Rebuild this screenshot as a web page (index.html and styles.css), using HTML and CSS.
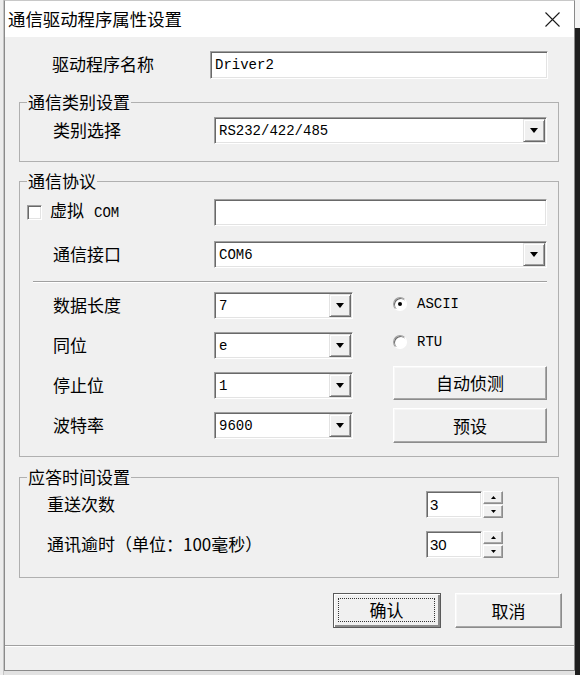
FILE: index.html
```html
<!DOCTYPE html>
<html lang="zh-CN">
<head>
<meta charset="utf-8">
<title>通信驱动程序属性设置</title>
<link rel="stylesheet" href="styles.css">
</head>
<body>
<div class="screen">
  <div class="desk-left"></div>
  <div class="middle">
    <div class="window">
      <div class="titlebar">
        <span class="title">通信驱动程序属性设置</span>
        <svg class="close" width="15" height="15" viewBox="0 0 15 15"><path d="M0.5 0.5L14.5 14.5M14.5 0.5L0.5 14.5" stroke="#1a1a1a" stroke-width="1.1" fill="none"/></svg>
      </div>
      <div class="client">
        <div class="name-row">
          <span class="label name-label">驱动程序名称</span>
          <div class="edit name-edit"><span class="mono">Driver2</span></div>
        </div>

        <fieldset class="group g1">
          <legend>通信类别设置</legend>
          <div class="row">
            <span class="label">类别选择</span>
            <div class="combo wide"><span class="value mono">RS232/422/485</span><span class="drop"><svg width="8" height="5" viewBox="0 0 8 5"><path d="M0 0H8L4 5Z" fill="#000"/></svg></span></div>
          </div>
        </fieldset>

        <fieldset class="group g2">
          <legend>通信协议</legend>
          <div class="row check-row">
            <span class="checkbox"></span>
            <span class="label">虚拟<span class="mono com">COM</span></span>
            <div class="edit wide"></div>
          </div>
          <div class="row port-row">
            <span class="label">通信接口</span>
            <div class="combo wide"><span class="value mono">COM6</span><span class="drop"><svg width="8" height="5" viewBox="0 0 8 5"><path d="M0 0H8L4 5Z" fill="#000"/></svg></span></div>
          </div>
          <div class="separator"></div>
          <div class="lower">
            <div class="lower-left">
              <div class="row-s"><span class="label">数据长度</span><div class="combo narrow"><span class="value mono">7</span><span class="drop"><svg width="8" height="5" viewBox="0 0 8 5"><path d="M0 0H8L4 5Z" fill="#000"/></svg></span></div></div>
              <div class="row-s"><span class="label">同位</span><div class="combo narrow"><span class="value mono">e</span><span class="drop"><svg width="8" height="5" viewBox="0 0 8 5"><path d="M0 0H8L4 5Z" fill="#000"/></svg></span></div></div>
              <div class="row-s"><span class="label">停止位</span><div class="combo narrow"><span class="value mono">1</span><span class="drop"><svg width="8" height="5" viewBox="0 0 8 5"><path d="M0 0H8L4 5Z" fill="#000"/></svg></span></div></div>
              <div class="row-s"><span class="label">波特率</span><div class="combo narrow"><span class="value mono">9600</span><span class="drop"><svg width="8" height="5" viewBox="0 0 8 5"><path d="M0 0H8L4 5Z" fill="#000"/></svg></span></div></div>
            </div>
            <div class="lower-right">
              <div class="radio-row"><span class="radio checked"></span><span class="mono">ASCII</span></div>
              <div class="radio-row second"><span class="radio"></span><span class="mono">RTU</span></div>
              <div class="btn detect">自动侦测</div>
              <div class="btn preset">预设</div>
            </div>
          </div>
        </fieldset>

        <fieldset class="group g3">
          <legend>应答时间设置</legend>
          <div class="spin-row">
            <span class="label">重送次数</span>
            <div class="spin">
              <div class="edit spin-edit"><span class="num">3</span></div>
              <div class="spin-btns">
                <span class="sbtn"><svg width="5" height="3" viewBox="0 0 5 3"><path d="M2.5 0L5 3H0Z" fill="#000"/></svg></span>
                <span class="sbtn"><svg width="5" height="3" viewBox="0 0 5 3"><path d="M0 0H5L2.5 3Z" fill="#000"/></svg></span>
              </div>
            </div>
          </div>
          <div class="spin-row second">
            <span class="label">通讯逾时（单位：100毫秒）</span>
            <div class="spin">
              <div class="edit spin-edit"><span class="num">30</span></div>
              <div class="spin-btns">
                <span class="sbtn"><svg width="5" height="3" viewBox="0 0 5 3"><path d="M2.5 0L5 3H0Z" fill="#000"/></svg></span>
                <span class="sbtn"><svg width="5" height="3" viewBox="0 0 5 3"><path d="M0 0H5L2.5 3Z" fill="#000"/></svg></span>
              </div>
            </div>
          </div>
        </fieldset>

        <div class="actions">
          <div class="btn default ok"><span class="focus">确认</span></div>
          <div class="btn cancel">取消</div>
        </div>
      </div>
      <div class="statusbar"></div>
    </div>
    <div class="desk-bottom"></div>
  </div>
  <div class="desk-right">
    <div class="dr-top"></div>
    <div class="dr-bottom"></div>
  </div>
</div>
</body>
</html>
```

FILE: styles.css
```css
* { box-sizing: border-box; margin: 0; padding: 0; }
html, body { width: 580px; height: 675px; overflow: hidden; }
body {
  background: #e6e6e6;
  font-family: "Noto Sans CJK SC", "Noto Sans", sans-serif;
  font-size: 17px;
  line-height: 20px;
  color: #000;
}
.screen { display: flex; height: 675px; }
.desk-left { width: 4px; background: #ececec; border-right: 1px solid #c4c4c4; }
.middle { width: 571px; display: flex; flex-direction: column; }
.desk-bottom { flex: 1; background: #e2e2e2; }
.desk-right { width: 5px; display: flex; flex-direction: column; }
.dr-top { height: 28px; background: #f4f4f4; }
.dr-bottom { flex: 1; background: #1f1f1f; }

.window {
  height: 671px;
  display: flex;
  flex-direction: column;
  background: #f0f0f0;
  border: 1px solid #8a8a8a;
  border-top-color: #c8c8c8;
}
.titlebar {
  height: 36px;
  flex: none;
  background: #fff;
  display: flex;
  align-items: center;
  justify-content: space-between;
  padding: 0 14px 0 3px;
}
.title { font-size: 17.4px; line-height: 20px; }
.close { display: block; }

.client { flex: 1; display: flex; flex-direction: column; padding-top: 14px; }
.statusbar {
  height: 25px;
  flex: none;
  border-top: 1px solid #a0a0a0;
  box-shadow: inset 0 1px #fff;
}

.label { padding-bottom: 2px; }
.mono { font-family: "Liberation Mono", "DejaVu Sans Mono", monospace; font-size: 14px; }
.com { margin-left: 10px; }
.num { font-family: "Liberation Sans", Arial, sans-serif; font-size: 15px; }

/* sunken field */
.edit, .combo, .checkbox {
  background: #fff;
  border: 1px solid;
  border-color: #a0a0a0 #fff #fff #a0a0a0;
  box-shadow: inset 1px 1px #696969, inset -1px -1px #e3e3e3;
}
.edit { height: 27px; display: flex; align-items: center; padding-left: 4px; }

.name-row { display: flex; align-items: center; padding-left: 47px; }
.name-label { width: 158px; }
.name-edit { width: 338px; height: 28px; }

.group {
  border: 1px solid #b0b0b0;
  margin: 0 15px 0 14px;
  min-width: 0;
  padding: 0;
}
.group legend {
  margin-left: 7px;
  padding: 0 1px;
  font-size: 17px;
  line-height: 20px;
}
.g1 { margin-top: 13px; padding-top: 5px; padding-bottom: 17px; }
.g2 { margin-top: 9px; padding-top: 8px; padding-bottom: 13px; }
.g3 { margin-top: 10px; padding-top: 4px; padding-bottom: 19px; }

.row { display: flex; align-items: center; padding: 0 11px 0 33px; }
.row .label { flex: 1; }
.wide { width: 333px; }
.check-row { padding-left: 7px; }
.checkbox { width: 15px; height: 15px; flex: none; margin-right: 8px; }
.port-row { margin-top: 15px; }

.combo { height: 27px; display: flex; padding: 1px; }
.combo .value { flex: 1; display: flex; align-items: center; padding-left: 3px; }
.drop {
  width: 22px;
  display: flex;
  align-items: center;
  justify-content: center;
  background: #f0f0f0;
  border: 1px solid;
  border-color: #e3e3e3 #696969 #696969 #e3e3e3;
  box-shadow: inset 1px 1px #fff, inset -1px -1px #a0a0a0;
}
.drop svg { display: block; }
.narrow { width: 139px; }

.separator {
  margin: 13px 11px 0 13px;
  height: 2px;
  border-top: 1px solid #a0a0a0;
  border-bottom: 1px solid #fff;
}

.lower { display: flex; margin-top: 9px; padding: 0 11px 0 33px; }
.lower-left { display: flex; flex-direction: column; gap: 13px; }
.row-s { display: flex; align-items: center; }
.row-s .label { width: 161px; }
.lower-right { margin-left: 40px; width: 154px; display: flex; flex-direction: column; }
.radio-row { height: 24px; display: flex; align-items: center; }
.radio-row.second { margin-top: 14px; }
.radio {
  width: 14px;
  height: 14px;
  border-radius: 50%;
  background: #fff;
  border: 1px solid;
  border-color: #a0a0a0 #fff #fff #a0a0a0;
  box-shadow: inset 1px 1px #696969;
  margin-right: 10px;
  display: flex;
  align-items: center;
  justify-content: center;
}
.radio.checked::after {
  content: "";
  width: 4px;
  height: 4px;
  border-radius: 50%;
  background: #000;
}

.btn {
  display: flex;
  align-items: center;
  justify-content: center;
  background: #f0f0f0;
  border: 1px solid;
  border-color: #fff #8c8c8c #8c8c8c #fff;
  box-shadow: inset -1px -1px #a8a8a8, inset 1px 1px #f7f7f7;
}
.detect { height: 34px; margin-top: 12px; }
.preset { height: 35px; margin-top: 8px; }

.spin-row { display: flex; align-items: center; padding: 0 55px 0 27px; }
.spin-row .label { flex: 1; }
.spin-row.second { margin-top: 13px; }
.spin { display: flex; gap: 1px; }
.spin-edit { width: 56px; padding-left: 3px; }
.spin-btns { width: 20px; height: 27px; display: flex; flex-direction: column; gap: 1px; }
.sbtn {
  flex: 1;
  display: flex;
  align-items: center;
  justify-content: center;
  background: #f0f0f0;
  border: 1px solid;
  border-color: #fff #8c8c8c #8c8c8c #fff;
  box-shadow: inset -1px -1px #a8a8a8;
}
.sbtn svg { display: block; }

.actions { display: flex; justify-content: flex-end; gap: 14px; margin-top: 15px; padding-right: 12px; }
.actions .btn { height: 35px; }
.ok { width: 108px; }
.cancel { width: 107px; }
.btn.default {
  border: 1px solid #5a5a5a;
  box-shadow: inset 1px 1px #fff, inset -2px -2px #8a8a8a;
  padding: 4px 5px 5px 4px;
}
.focus {
  flex: 1;
  align-self: stretch;
  display: flex;
  align-items: center;
  justify-content: center;
  border: 1px dotted #333;
}
```
